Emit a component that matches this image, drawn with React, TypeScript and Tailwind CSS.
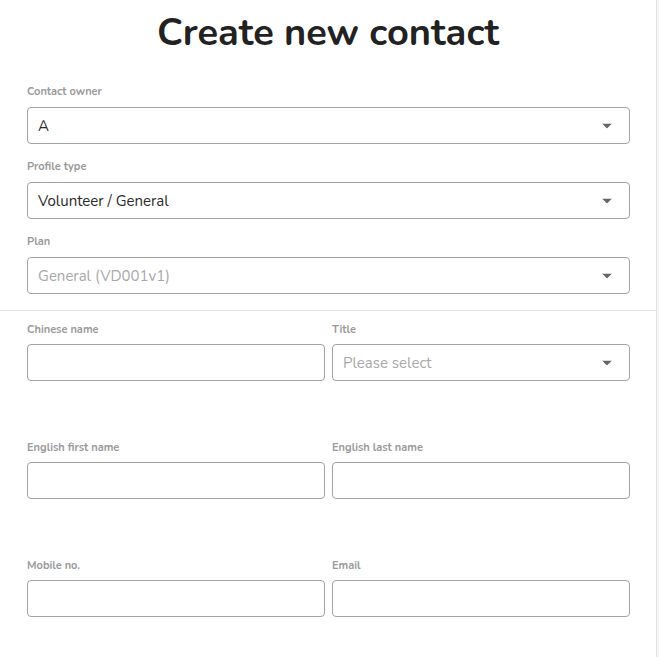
import React from "react";

const font = { fontFamily: '"Nunito", "Noto Sans", sans-serif' };

function Caret() {
  return (
    <svg width="10" height="5" viewBox="0 0 10 5" className="absolute right-[17px] top-1/2 -translate-y-1/2">
      <path d="M0 0 L10 0 L5 5 Z" fill="#666" />
    </svg>
  );
}

function Label({ children, low }: { children: React.ReactNode; low?: boolean }) {
  return (
    <div className={`h-[16px] leading-[16px] text-[11px] font-bold text-[#9a9a9a] mb-[8px] relative ${low ? "top-[2px]" : "top-[1px]"}`}>
      {children}
    </div>
  );
}

function Box({ value, placeholder, select, disabled }: { value?: string; placeholder?: string; select?: boolean; disabled?: boolean }) {
  return (
    <div className="relative h-[37px] border border-[#a3a3a3] rounded-[4px] bg-white flex items-center pl-[10px]">
      {value && <span className={`pt-[2px] text-[15px] ${disabled ? "text-[#a8a8a8]" : "text-[#2a2a2a]"}`}>{value}</span>}
      {placeholder && <span className="pt-[2px] text-[15px] text-[#a8a8a8]">{placeholder}</span>}
      {select && <Caret />}
    </div>
  );
}

function Field({ label, low, ...rest }: { label: string; low?: boolean; value?: string; placeholder?: string; select?: boolean; disabled?: boolean }) {
  return (
    <div>
      <Label low={low}>{label}</Label>
      <Box {...rest} />
    </div>
  );
}

export default function App() {
  return (
    <div className="flex w-[659px] h-[657px] bg-[#f5f5f5] overflow-hidden" style={font}>
      <div className="w-[657px] h-full bg-white border-r border-[#e3e3e3]">
        <h1 className="pt-[11px] h-[44px] box-content leading-[44px] text-center text-[38px] font-bold text-[#222]">Create new contact</h1>
        <div className="px-[27px] pt-[28px] flex flex-col gap-[14px] pr-[26px]">
          <Field label="Contact owner" value="A" select />
          <Field label="Profile type" value="Volunteer / General" select />
          <Field label="Plan" value="General (VD001v1)" select disabled />
        </div>
        <div className="mt-[16px] border-t border-[#e5e5e5]" />
        <div className="px-[27px] pr-[26px] pt-[9px] grid grid-cols-2 gap-x-[7px] gap-y-[57px]">
          <Field low label="Chinese name" />
          <Field low label="Title" placeholder="Please select" select />
          <Field low label="English first name" />
          <Field low label="English last name" />
          <Field low label="Mobile no." />
          <Field low label="Email" />
        </div>
      </div>
    </div>
  );
}
